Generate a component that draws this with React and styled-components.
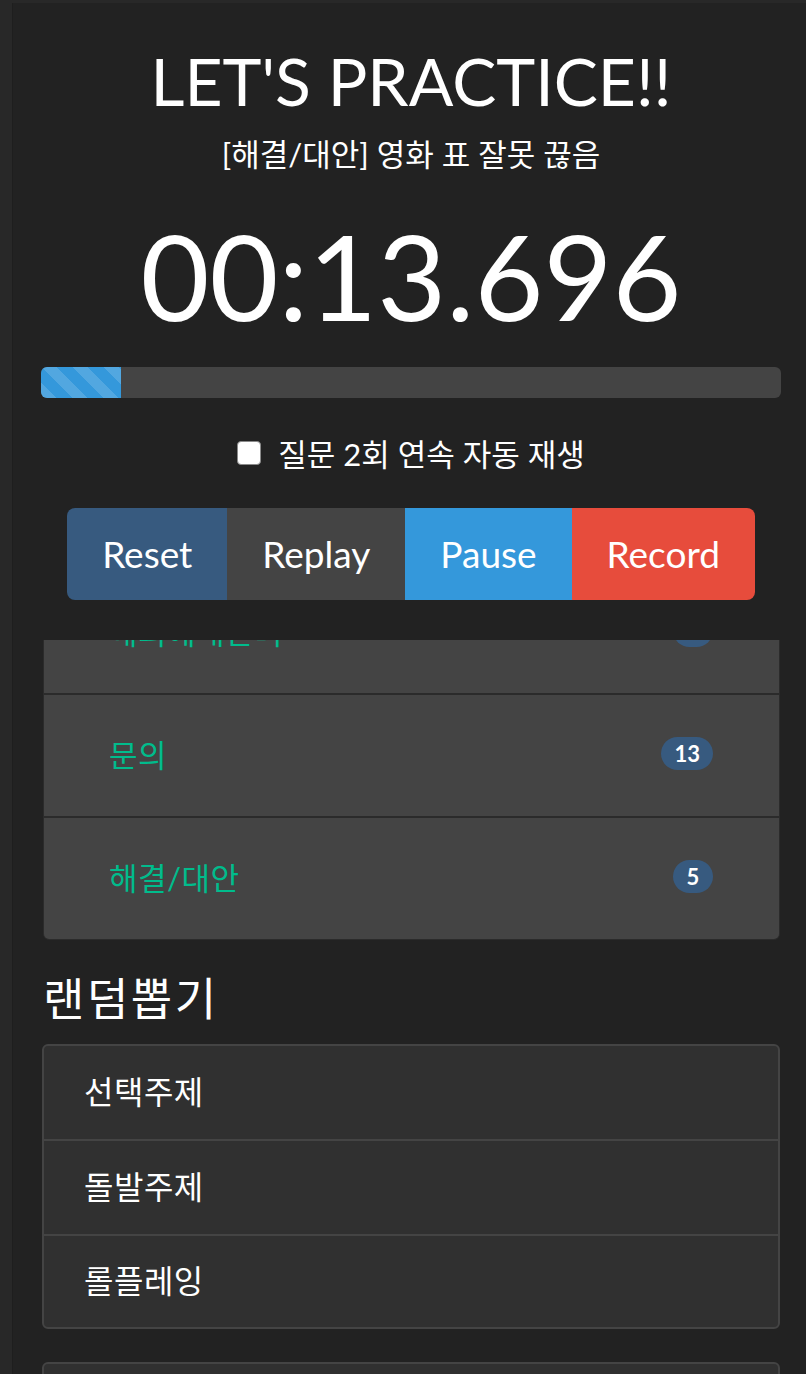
import React, { useLayoutEffect, useRef } from 'react';
import styled, { createGlobalStyle } from 'styled-components';

const GlobalStyle = createGlobalStyle`
  html, body {
    margin: 0;
    padding: 0;
    background: #282828;
  }
  body {
    font-family: Lato, "Noto Sans CJK KR", sans-serif;
    color: #fff;
  }
  * {
    box-sizing: border-box;
  }
`;

const Page = styled.div`
  margin: 3px 0 0 12px;
  min-height: 1371px;
  padding: 41px 25px 0 28px;
  background: #222;
  border-left: 1px solid #1e1e1e;
`;

const Title = styled.h1`
  margin: 0;
  font-size: 66px;
  font-weight: 400;
  line-height: 74px;
  text-align: center;
`;

const Subtitle = styled.p`
  margin: 16px 0 0;
  font-size: 31px;
  line-height: 40px;
  text-align: center;
`;

const Timer = styled.div`
  margin-top: 35px;
  font-size: 119px;
  line-height: 132px;
  text-align: center;
`;

const Progress = styled.div`
  margin-top: 26px;
  height: 31px;
  border-radius: 6px;
  background: #444;
  overflow: hidden;
`;

const ProgressFill = styled.div`
  height: 100%;
  background-color: #3498db;
  background-image: linear-gradient(
    45deg,
    rgba(255, 255, 255, 0.15) 25%,
    transparent 25%,
    transparent 50%,
    rgba(255, 255, 255, 0.15) 50%,
    rgba(255, 255, 255, 0.15) 75%,
    transparent 75%,
    transparent
  );
  background-size: 31px 31px;
`;

const CheckRow = styled.label`
  margin-top: 34px;
  height: 40px;
  display: flex;
  align-items: center;
  justify-content: center;
  gap: 17px;
  font-size: 31px;
`;

const CheckBox = styled.span`
  width: 24px;
  height: 24px;
  margin-top: 1px;
  border-radius: 4px;
  background: #fff;
  border: 1px solid #8a8a8a;
`;

const ButtonGroup = styled.div`
  margin: 36px auto 0;
  width: fit-content;
  display: flex;
  border-radius: 8px;
  overflow: hidden;
`;

const tones = {
  primary: '#375a7f',
  dark: '#444444',
  info: '#3498db',
  danger: '#e74c3c',
};

const Button = styled.button`
  border: 0;
  margin: 0;
  padding: 22px 35px;
  font-family: Lato, sans-serif;
  font-size: 37px;
  line-height: 48px;
  color: #fff;
  background: ${({ $tone }) => tones[$tone]};
`;

const Scroller = styled.div`
  margin-top: 40px;
  height: 300px;
  overflow: hidden;
`;

const CategoryList = styled.div`
  margin: 0 1px 0 2px;
  border-radius: 6px;
  overflow: hidden;
  background: #2b2b2b;
  border: 1px solid #2b2b2b;
  display: flex;
  flex-direction: column;
  gap: 2px;
`;

const CategoryItem = styled.div`
  height: 121px;
  padding: 0 66px 5px 65px;
  display: flex;
  align-items: center;
  justify-content: space-between;
  background: #444;
  color: #00bc8c;
  font-size: 31px;
  letter-spacing: 0.5px;
`;

const Badge = styled.span`
  min-width: 40px;
  padding: 5px 13px;
  border-radius: 17px;
  background: #375a7f;
  color: #fff;
  font-family: Lato, sans-serif;
  font-weight: 700;
  font-size: 22px;
  line-height: 23px;
  letter-spacing: 0;
  text-align: center;
`;

const SectionTitle = styled.h2`
  margin: 33px 0 0 2px;
  font-size: 45px;
  font-weight: 400;
  line-height: 52px;
  letter-spacing: 2.5px;
`;

const Card = styled.div`
  margin: ${({ $gap }) => $gap}px 1px 0 1px;
  border: 2px solid #444;
  border-radius: 6px;
  background: #303030;
  min-height: ${({ $min }) => $min || 0}px;
  overflow: hidden;
`;

const CardItem = styled.div`
  height: 95px;
  padding: 0 40px 5px;
  display: flex;
  align-items: center;
  font-size: 32px;
  letter-spacing: 0.5px;
  border-top: 2px solid #444;

  &:first-child {
    border-top: 0;
    height: 93px;
  }
  &:last-child {
    height: 93px;
  }
`;

const categories = [
  { name: '해외예매관리', count: 4 },
  { name: '문의', count: 13 },
  { name: '해결/대안', count: 5 },
];

const topics = ['선택주제', '돌발주제', '롤플레잉'];

export default function App() {
  const scroller = useRef(null);

  useLayoutEffect(() => {
    if (scroller.current) {
      scroller.current.scrollTop = scroller.current.scrollHeight;
    }
  }, []);

  const progress = 10.8;

  return (
    <>
      <GlobalStyle />
      <Page>
        <Title>LET'S PRACTICE!!</Title>
        <Subtitle>[해결/대안] 영화 표 잘못 끊음</Subtitle>
        <Timer>00:13.696</Timer>
        <Progress>
          <ProgressFill style={{ width: `${progress}%` }} />
        </Progress>
        <CheckRow>
          <CheckBox />
          질문 2회 연속 자동 재생
        </CheckRow>
        <ButtonGroup>
          <Button $tone="primary">Reset</Button>
          <Button $tone="dark">Replay</Button>
          <Button $tone="info">Pause</Button>
          <Button $tone="danger">Record</Button>
        </ButtonGroup>
        <Scroller ref={scroller}>
          <CategoryList>
            {categories.map((c) => (
              <CategoryItem key={c.name}>
                {c.name}
                <Badge>{c.count}</Badge>
              </CategoryItem>
            ))}
          </CategoryList>
        </Scroller>
        <SectionTitle>랜덤뽑기</SectionTitle>
        <Card $gap={19}>
          {topics.map((t) => (
            <CardItem key={t}>{t}</CardItem>
          ))}
        </Card>
        <Card $gap={33} $min={120} />
      </Page>
    </>
  );
}
